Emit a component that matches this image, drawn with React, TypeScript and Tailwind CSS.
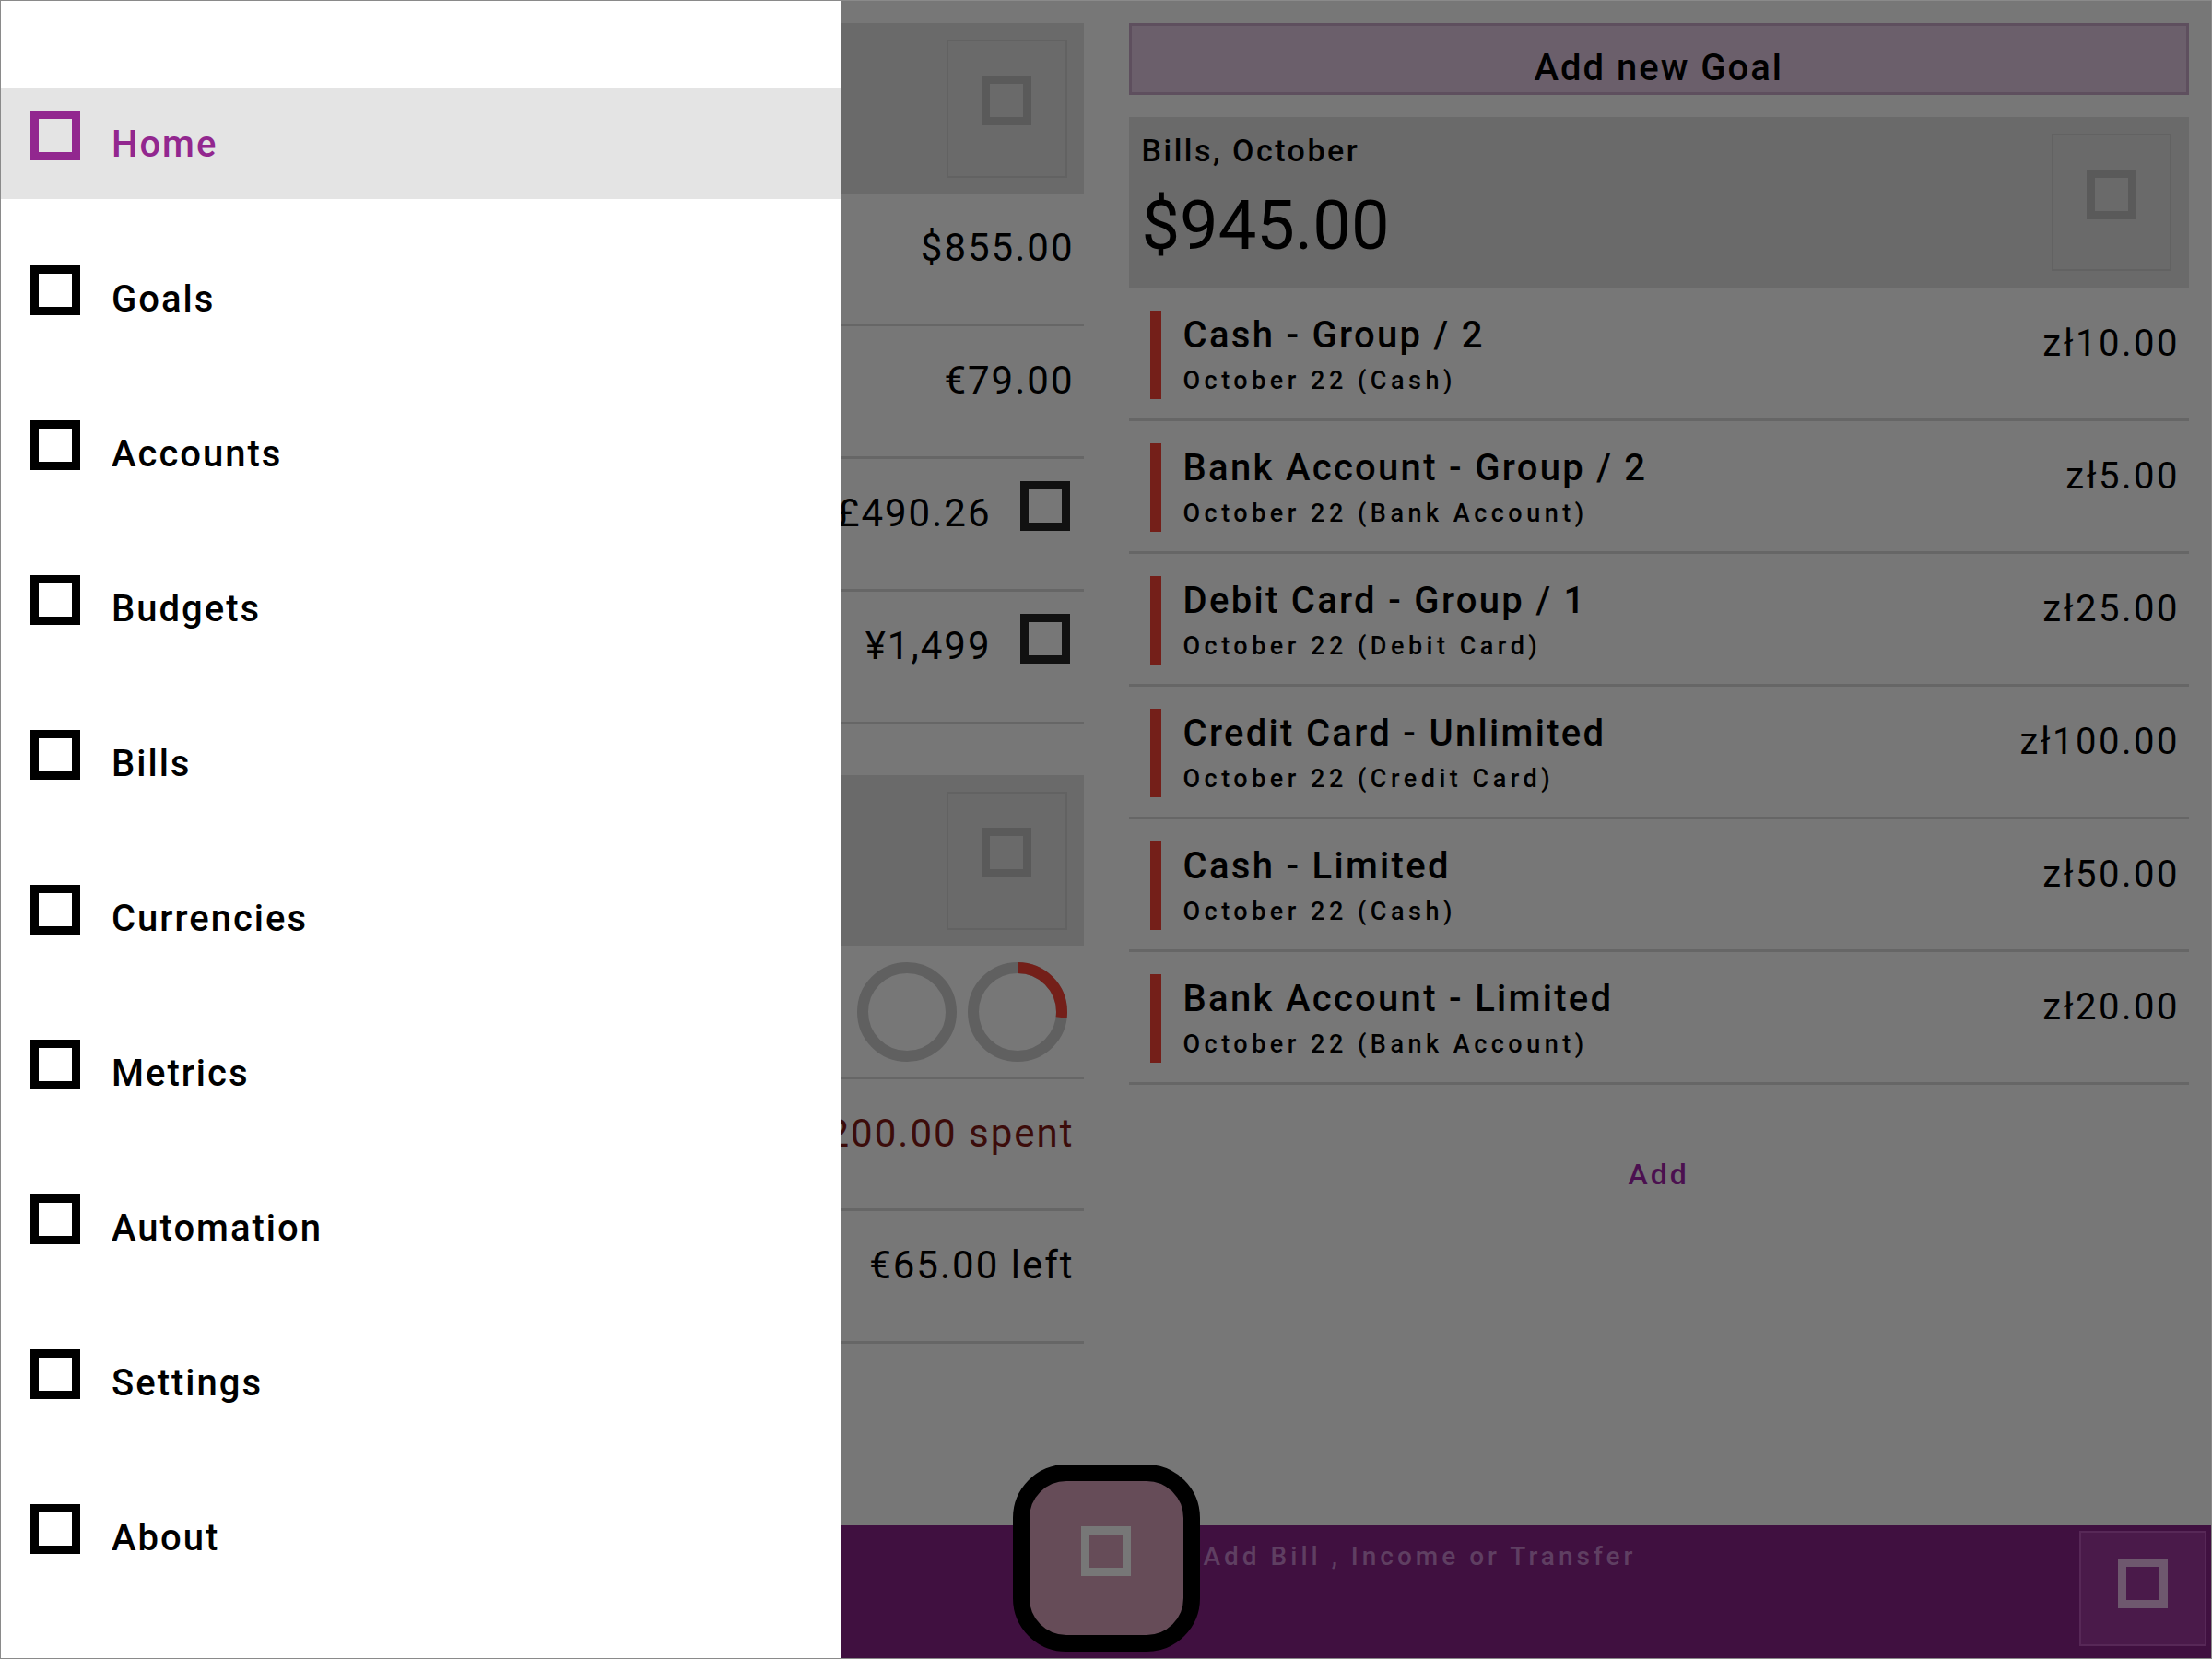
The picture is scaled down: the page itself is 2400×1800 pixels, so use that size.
import React from 'react';

const menu = ['Home', 'Goals', 'Accounts', 'Budgets', 'Bills', 'Currencies', 'Metrics', 'Automation', 'Settings', 'About'];

const bills = [
  { title: 'Cash - Group / 2', sub: 'October 22 (Cash)', amount: 'zł10.00' },
  { title: 'Bank Account - Group / 2', sub: 'October 22 (Bank Account)', amount: 'zł5.00' },
  { title: 'Debit Card - Group / 1', sub: 'October 22 (Debit Card)', amount: 'zł25.00' },
  { title: 'Credit Card - Unlimited', sub: 'October 22 (Credit Card)', amount: 'zł100.00' },
  { title: 'Cash - Limited', sub: 'October 22 (Cash)', amount: 'zł50.00' },
  { title: 'Bank Account - Limited', sub: 'October 22 (Bank Account)', amount: 'zł20.00' },
];

const Square = ({ className = '' }: { className?: string }) => (
  <div className={`h-[54px] w-[54px] shrink-0 border-[9px] ${className}`} />
);

const IconBox = () => (
  <div className="flex h-[150px] w-[131px] shrink-0 justify-center border-2 border-[#626262] pt-[37px]">
    <Square className="border-[#5a5a5a]" />
  </div>
);

const Ring = ({ pct }: { pct: number }) => {
  const c = 2 * Math.PI * 48;
  return (
    <svg width="108" height="108" viewBox="0 0 108 108">
      <circle cx="54" cy="54" r="48" fill="none" stroke="#606060" strokeWidth="12" />
      {pct > 0 && (
        <circle
          cx="54"
          cy="54"
          r="48"
          fill="none"
          stroke="#741f19"
          strokeWidth="12"
          strokeDasharray={`${c * pct} ${c}`}
          transform="rotate(-90 54 54)"
        />
      )}
    </svg>
  );
};

const AmountRow = ({ value, icon, color = 'text-black', h = 'h-[144px]' }: { value: string; icon?: boolean; color?: string; h?: string }) => (
  <div className={`flex ${h} items-start justify-end border-b-[3px] border-[#666666] pt-6 ${icon ? 'pr-[15px]' : 'pr-[10px]'}`}>
    <span className={`mt-[11px] text-[42px] leading-[48px] tracking-[2px] ${color}`}>{value}</span>
    {icon && <Square className="ml-[31px] border-[#111111]" />}
  </div>
);

export default function App() {
  return (
    <div className="relative h-[1800px] w-[2400px] overflow-hidden border border-[#8a8a8a] bg-[#777777] [font-family:Roboto,'Noto_Sans',sans-serif] text-black">
      <div className="flex h-full flex-col">
        <div className="grid flex-1 grid-cols-2 gap-[49px] px-6 pt-6">
          {/* left column, mostly under the drawer */}
          <div className="flex flex-col">
            <div className="flex h-[185px] justify-end bg-[#6a6a6a] pt-[18px] pr-[18px]">
              <IconBox />
            </div>
            <AmountRow value="$855.00" />
            <AmountRow value="€79.00" />
            <AmountRow value="£490.26" icon />
            <AmountRow value="¥1,499" icon />
            <div className="mt-[55px] flex h-[185px] justify-end bg-[#6a6a6a] pt-[18px] pr-[18px]">
              <IconBox />
            </div>
            <div className="flex h-[145px] items-start justify-end gap-3 border-b-[3px] border-[#666666] pt-[18px] pr-[18px]">
              <Ring pct={0} />
              <Ring pct={0.27} />
            </div>
            <AmountRow value="€1,200.00 spent" color="text-[#3c0c0a]" h="h-[143px]" />
            <AmountRow value="€65.00 left" />
          </div>

          {/* right column */}
          <div className="flex flex-col">
            <div className="flex h-[78px] justify-center border-[3px] border-[#5e4f5e] bg-[#6b5f6b] pt-[22px]">
              <span className="text-[40px] font-medium leading-[48px] tracking-[2px]">Add new Goal</span>
            </div>
            <div className="mt-6 flex h-[186px] justify-between bg-[#6a6a6a] pt-[18px] pr-[19px] pl-[14px]">
              <div className="-mt-[2px]">
                <div className="text-[34px] font-medium leading-[40px] tracking-[2.5px]">Bills, October</div>
                <div className="mt-[22px] text-[74px] leading-[80px]">$945.00</div>
              </div>
              <div className="flex h-[149px] w-[130px] justify-center border-2 border-[#626262] pt-[37px]">
                <Square className="border-[#5a5a5a]" />
              </div>
            </div>
            {bills.map((b) => (
              <div key={b.title} className="flex border-b-[3px] border-[#666666] pt-6 pr-[10px] pb-[21px] pl-[23px]">
                <div className="h-24 w-3 bg-[#741f19]" />
                <div className="ml-6 flex-1">
                  <div className="mt-[3px] text-[40px] font-medium leading-[48px] tracking-[2.3px]">{b.title}</div>
                  <div className="mt-2 text-[27px] font-medium leading-[34px] tracking-[4.5px]">{b.sub}</div>
                </div>
                <div className="mt-3 text-[40px] leading-[48px] tracking-[2.5px]">{b.amount}</div>
              </div>
            ))}
            <div className="mt-[77px] text-center text-[32px] font-medium leading-[40px] tracking-[3px] text-[#4b1050]">Add</div>
          </div>
        </div>

        {/* bottom bar */}
        <div className="grid h-[144px] grid-cols-[1fr_203px_1fr] bg-[#401040]">
          <div />
          <button className="-mt-[66px] flex h-[203px] w-[203px] items-center justify-center rounded-[58px] border-[18px] border-black bg-[#664c58] pb-4">
            <Square className="border-[#777777]" />
          </button>
          <div className="flex justify-between pl-1">
            <span className="mt-[17px] text-[28px] font-medium leading-[34px] tracking-[4px] text-[#5f3f62]">Add Bill , Income or Transfer</span>
            <div className="mt-[6px] mr-[5px] flex h-[125px] w-[138px] justify-center border-2 border-[#572857] bg-[#4a1a4a] pt-[28px]">
              <Square className="border-[#6e586e]" />
            </div>
          </div>
        </div>
      </div>

      {/* navigation drawer */}
      <nav className="absolute inset-y-0 left-0 z-10 flex w-[911px] flex-col gap-12 bg-white pt-[95px]">
        {menu.map((item, i) => (
          <div key={item} className={`flex h-[120px] items-center ${i === 0 ? 'bg-[#e4e4e4]' : ''}`}>
            <Square className={`mt-6 ml-[32px] self-start ${i === 0 ? 'border-[#92278f]' : 'border-black'}`} />
            <span
              className={`ml-[34px] mt-[2px] text-[40px] font-medium leading-[48px] tracking-[2px] ${i === 0 ? 'text-[#92278f]' : 'text-black'}`}
            >
              {item}
            </span>
          </div>
        ))}
      </nav>
    </div>
  );
}
